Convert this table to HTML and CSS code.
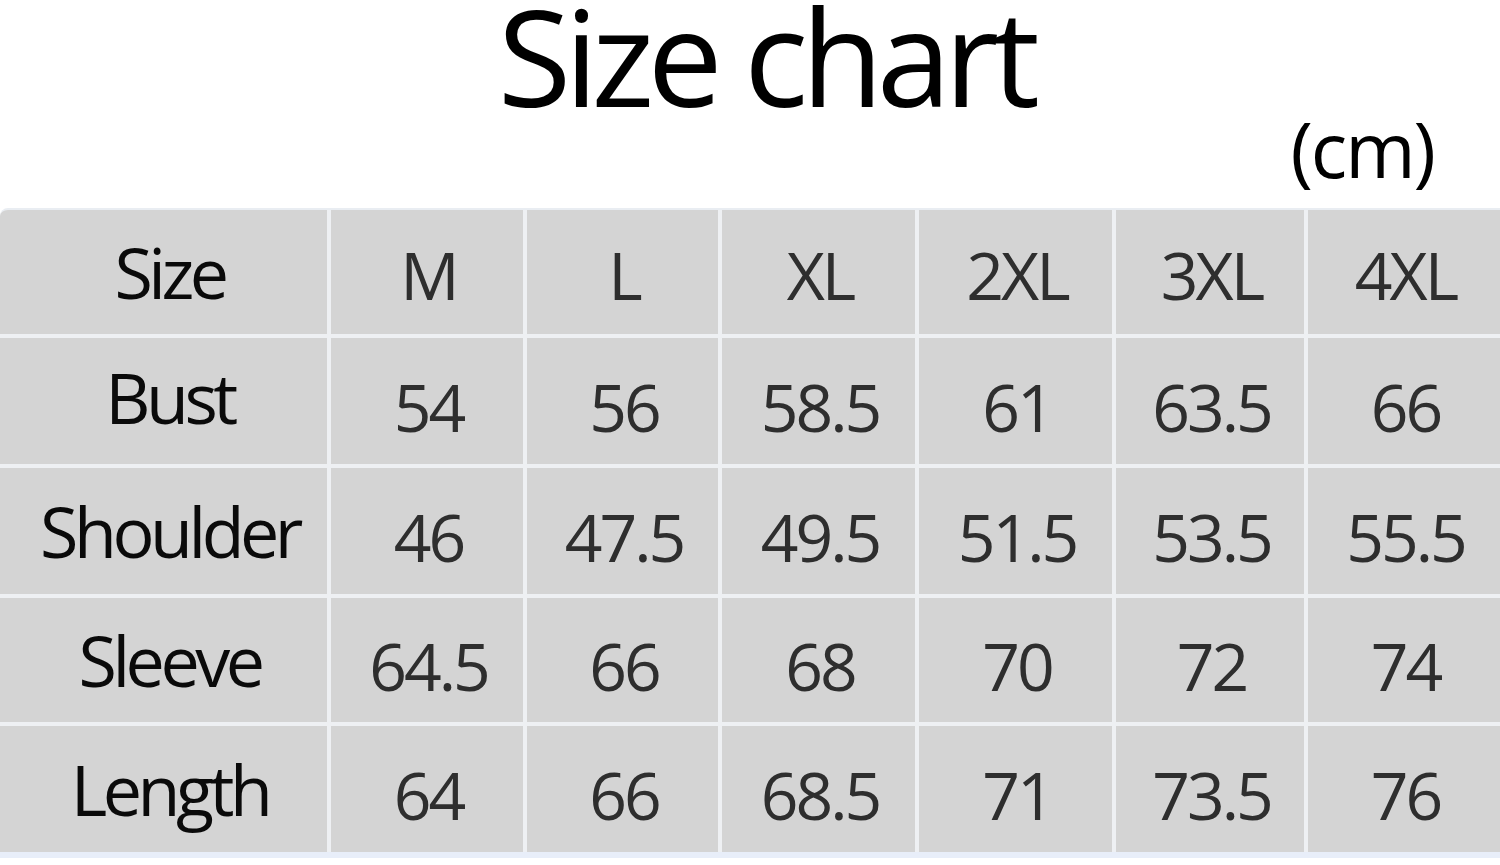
FILE: index.html
```html
<!DOCTYPE html>
<html>
<head>
<meta charset="utf-8">
<link rel="stylesheet" href="styles.css">
</head>
<body>
<div class="page">
  <h1 class="title">Size chart</h1>
  <div class="unit">(cm)</div>
  <div class="chart">
    <div class="cell label">Size</div>
    <div class="cell val">M</div>
    <div class="cell val">L</div>
    <div class="cell val">XL</div>
    <div class="cell val">2XL</div>
    <div class="cell val">3XL</div>
    <div class="cell val">4XL</div>

    <div class="cell label up">Bust</div>
    <div class="cell val">54</div>
    <div class="cell val">56</div>
    <div class="cell val">58.5</div>
    <div class="cell val">61</div>
    <div class="cell val">63.5</div>
    <div class="cell val">66</div>

    <div class="cell label">Shoulder</div>
    <div class="cell val">46</div>
    <div class="cell val">47.5</div>
    <div class="cell val">49.5</div>
    <div class="cell val">51.5</div>
    <div class="cell val">53.5</div>
    <div class="cell val">55.5</div>

    <div class="cell label">Sleeve</div>
    <div class="cell val">64.5</div>
    <div class="cell val">66</div>
    <div class="cell val">68</div>
    <div class="cell val">70</div>
    <div class="cell val">72</div>
    <div class="cell val">74</div>

    <div class="cell label">Length</div>
    <div class="cell val">64</div>
    <div class="cell val">66</div>
    <div class="cell val">68.5</div>
    <div class="cell val">71</div>
    <div class="cell val">73.5</div>
    <div class="cell val">76</div>
  </div>
</div>
</body>
</html>
```

FILE: styles.css
```css
html, body {
  margin: 0;
  padding: 0;
  background: #ffffff;
}

.page {
  width: 1500px;
  height: 865px;
  overflow: hidden;
  font-family: "Open Sans", "Noto Sans", sans-serif;
  color: #000;
}

.title {
  margin: 0;
  height: 114px;
  font-size: 134px;
  font-weight: 400;
  line-height: 110px;
  text-align: center;
  letter-spacing: -6.8px;
  padding-left: 31px;
  white-space: nowrap;
}

.unit {
  height: 94px;
  line-height: 70px;
  font-size: 76px;
  text-align: right;
  padding-right: 66px;
  letter-spacing: -2px;
}

.chart {
  display: grid;
  grid-template-columns: 327px 192px 191px 193px 193px 188px 192px;
  grid-template-rows: 124px 126px 126px 124px 126px;
  gap: 4px;
  background: #eef0f3;
  border-top: 2px solid #e9edf2;
  border-bottom: 6px solid #e8eef9;
  border-radius: 8px 0 0 0;
  overflow: hidden;
}

.cell {
  background: #d4d4d4;
  display: flex;
  align-items: center;
  justify-content: center;
  font-size: 66px;
  letter-spacing: -3px;
}

.label {
  color: #0a0a0a;
  font-size: 70px;
  letter-spacing: -4.5px;
  padding-left: 12px;
  box-sizing: border-box;
}

.val {
  color: #2e2e2e;
  padding-top: 10px;
  padding-left: 3px;
  box-sizing: border-box;
}

.chart .val:nth-child(-n+7) {
  padding-top: 4px;
}

.up {
  padding-bottom: 8px;
}
```
